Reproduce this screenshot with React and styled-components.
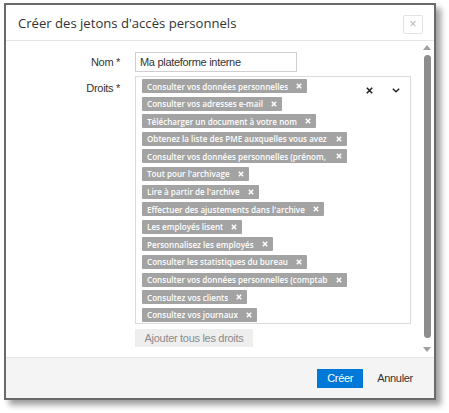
import React from 'react';
import styled, { createGlobalStyle } from 'styled-components';

const rights = [
  'Consulter vos données personnelles',
  'Consulter vos adresses e-mail',
  'Télécharger un document à votre nom',
  'Obtenez la liste des PME auxquelles vous avez accès',
  'Consulter vos données personnelles (prénom, nom)',
  "Tout pour l'archivage",
  "Lire à partir de l'archive",
  "Effectuer des ajustements dans l'archive",
  'Les employés lisent',
  'Personnalisez les employés',
  'Consulter les statistiques du bureau',
  'Consulter vos données personnelles (comptabilité)',
  'Consultez vos clients',
  'Consultez vos journaux',
];

const GlobalStyle = createGlobalStyle`
  html, body {
    margin: 0;
    background: #ffffff;
  }
  body {
    font-family: 'Liberation Sans', Arial, sans-serif;
  }
`;

const Page = styled.div`
  width: 449px;
  height: 413px;
  padding: 3px 0 0 4px;
  box-sizing: border-box;
`;

const Dialog = styled.div`
  width: 432px;
  height: 397px;
  box-sizing: border-box;
  border: 2px solid #6a6a6a;
  background: #fff;
  box-shadow: 5px 5px 6px rgba(0, 0, 0, 0.38);
  display: flex;
  flex-direction: column;
`;

const Header = styled.div`
  height: 35px;
  border-bottom: 1px solid #e5e5e5;
  display: flex;
  align-items: center;
  justify-content: space-between;
  padding: 0 11px 0 12px;
`;

const Title = styled.h3`
  margin: 0;
  font-family: 'Open Sans', sans-serif;
  font-size: 13.1px;
  font-weight: 400;
  color: #333;
`;

const CloseButton = styled.button`
  width: 20px;
  height: 19px;
  margin-top: 4px;
  padding: 0;
  border: 1px solid #e3e3e3;
  border-radius: 2px;
  background: #fff;
  color: #b5b5b5;
  font-size: 12px;
  line-height: 15px;
  font-family: 'Liberation Sans', sans-serif;
`;

const Body = styled.div`
  flex: 1;
  display: flex;
  min-height: 0;
`;

const Content = styled.div`
  flex: 1;
  padding-top: 11px;
  display: flex;
  flex-direction: column;
  gap: 4px;
`;

const FormRow = styled.div`
  display: flex;
  align-items: ${(p) => (p.top ? 'flex-start' : 'center')};
  gap: 15px;
`;

const Label = styled.label`
  width: 114px;
  text-align: right;
  font-size: 11px;
  letter-spacing: -0.3px;
  color: #333;
  padding-top: ${(p) => (p.top ? '6px' : '0')};
`;

const Input = styled.div`
  width: 162px;
  height: 20px;
  box-sizing: border-box;
  border: 1px solid #cfcfcf;
  padding: 0 4px;
  font-size: 11px;
  letter-spacing: -0.3px;
  line-height: 18px;
  color: #333;
`;

const Select = styled.div`
  width: 276px;
  height: 248px;
  box-sizing: border-box;
  border: 1px solid #dcdcdc;
  padding: 2px 0 0 6px;
  display: flex;
  justify-content: space-between;
`;

const TagList = styled.div`
  display: flex;
  flex-direction: column;
  align-items: flex-start;
  gap: 3.6px;
`;

const Tag = styled.span`
  display: flex;
  align-items: center;
  height: 14px;
  padding: 0 5px;
  background: #a3a3a3;
  border-radius: 1px;
  color: #fff;
  font-family: 'Open Sans', sans-serif;
  font-weight: 600;
  font-size: 8.1px;
`;

const TagText = styled.span`
  max-width: 181px;
  overflow: hidden;
  white-space: nowrap;
`;

const TagRemove = styled.svg`
  margin-left: 8px;
  width: 6px;
  height: 6px;
`;

const Controls = styled.div`
  display: flex;
  align-items: center;
  gap: 19px;
  padding: 5px 10px 0 0;
  height: 12px;
`;

const AddAllButton = styled.button`
  margin-left: 129px;
  width: 118px;
  height: 18px;
  margin-top: 1px;
  padding: 0;
  border: none;
  background: #eeeeee;
  color: #8a8a8a;
  font-family: 'Liberation Sans', sans-serif;
  font-size: 11px;
  letter-spacing: -0.3px;
`;

const ScrollBar = styled.div`
  width: 10px;
  margin-right: 2px;
  padding: 4px 0 5px;
  display: flex;
  flex-direction: column;
  align-items: center;
`;

const Arrow = styled.div`
  width: 0;
  height: 0;
  border-left: 4px solid transparent;
  border-right: 4px solid transparent;
  ${(p) => (p.down ? 'border-top: 5px solid #a0a0a0;' : 'border-bottom: 5px solid #a0a0a0;')}
`;

const Thumb = styled.div`
  width: 7px;
  height: 283px;
  margin: 5px 0 auto;
  border-radius: 4px;
  background: #8d8d8d;
`;

const Footer = styled.div`
  height: 40px;
  border-top: 1px solid #e5e5e5;
  background: #f4f4f4;
  display: flex;
  align-items: center;
  justify-content: flex-end;
  gap: 6px;
  padding-right: 13px;
`;

const PrimaryButton = styled.button`
  height: 19px;
  padding: 0 10px;
  border: none;
  background: #0078d7;
  color: #fff;
  font-family: 'Liberation Sans', sans-serif;
  font-size: 11px;
  letter-spacing: -0.3px;
`;

const LinkButton = styled.button`
  height: 19px;
  padding: 0 8px;
  border: none;
  background: transparent;
  color: #333;
  font-family: 'Liberation Sans', sans-serif;
  font-size: 11px;
  letter-spacing: -0.3px;
`;

const App = () => {
  return (
    <Page>
      <GlobalStyle />
      <Dialog>
        <Header>
          <Title>Créer des jetons d'accès personnels</Title>
          <CloseButton>×</CloseButton>
        </Header>
        <Body>
          <Content>
            <FormRow>
              <Label>Nom *</Label>
              <Input>Ma plateforme interne</Input>
            </FormRow>
            <FormRow top>
              <Label top>Droits *</Label>
              <Select>
                <TagList>
                  {rights.map((r) => (
                    <Tag key={r}>
                      <TagText>{r}</TagText>
                      <TagRemove viewBox="0 0 6 6">
                        <path d="M0.8 0.8 L5.2 5.2 M5.2 0.8 L0.8 5.2" stroke="#fff" strokeWidth="1.5" />
                      </TagRemove>
                    </Tag>
                  ))}
                </TagList>
                <Controls>
                  <svg width="7" height="7" viewBox="0 0 7 7">
                    <path d="M0.8 0.8 L6.2 6.2 M6.2 0.8 L0.8 6.2" stroke="#222" strokeWidth="1.6" />
                  </svg>
                  <svg width="8" height="5" viewBox="0 0 8 5">
                    <path d="M0.8 0.8 L4 3.8 L7.2 0.8" stroke="#222" strokeWidth="1.4" fill="none" />
                  </svg>
                </Controls>
              </Select>
            </FormRow>
            <AddAllButton>Ajouter tous les droits</AddAllButton>
          </Content>
          <ScrollBar>
            <Arrow />
            <Thumb />
            <Arrow down />
          </ScrollBar>
        </Body>
        <Footer>
          <PrimaryButton>Créer</PrimaryButton>
          <LinkButton>Annuler</LinkButton>
        </Footer>
      </Dialog>
    </Page>
  );
};

export default App;
